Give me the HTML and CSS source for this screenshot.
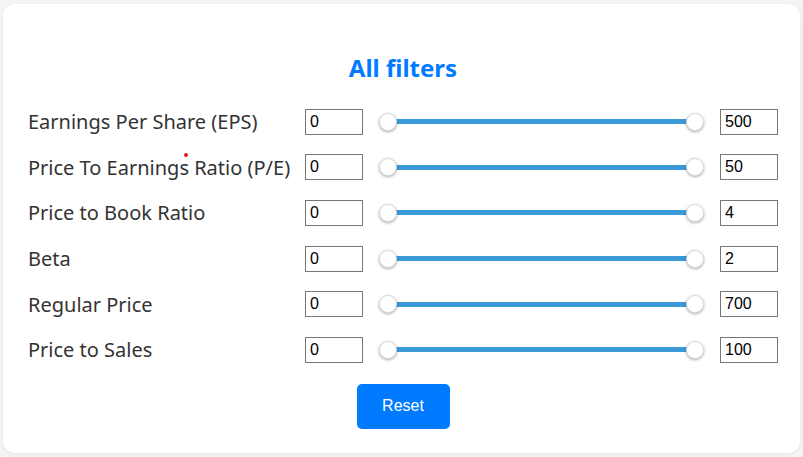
FILE: index.html
```html
<!DOCTYPE html>
<html>
<head>
<meta charset="utf-8">
<link rel="stylesheet" href="styles.css">
</head>
<body>
<div class="card">
  <h2 class="title">All filters</h2>
  <div class="rows">
    <div class="row">
      <span class="label">Earnings Per Share (EPS)</span>
      <input class="num" type="text" value="0">
      <div class="slider"><span class="thumb"></span><span class="bar"></span><span class="thumb"></span></div>
      <input class="num" type="text" value="500">
    </div>
    <div class="row">
      <span class="label">Price To Earnings Ratio (P/E)<span class="dot"></span></span>
      <input class="num" type="text" value="0">
      <div class="slider"><span class="thumb"></span><span class="bar"></span><span class="thumb"></span></div>
      <input class="num" type="text" value="50">
    </div>
    <div class="row">
      <span class="label">Price to Book Ratio</span>
      <input class="num" type="text" value="0">
      <div class="slider"><span class="thumb"></span><span class="bar"></span><span class="thumb"></span></div>
      <input class="num" type="text" value="4">
    </div>
    <div class="row">
      <span class="label">Beta</span>
      <input class="num" type="text" value="0">
      <div class="slider"><span class="thumb"></span><span class="bar"></span><span class="thumb"></span></div>
      <input class="num" type="text" value="2">
    </div>
    <div class="row">
      <span class="label">Regular Price</span>
      <input class="num" type="text" value="0">
      <div class="slider"><span class="thumb"></span><span class="bar"></span><span class="thumb"></span></div>
      <input class="num" type="text" value="700">
    </div>
    <div class="row">
      <span class="label">Price to Sales</span>
      <input class="num" type="text" value="0">
      <div class="slider"><span class="thumb"></span><span class="bar"></span><span class="thumb"></span></div>
      <input class="num" type="text" value="100">
    </div>
  </div>
  <div class="actions">
    <button class="reset" type="button">Reset</button>
  </div>
</div>
</body>
</html>
```

FILE: styles.css
```css
* { box-sizing: border-box; }
html, body { margin: 0; height: 100%; }
body {
  background: #f5f5f5;
  padding: 4px 3px 0 3px;
  font-family: "Noto Sans", "Open Sans", sans-serif;
}
.card {
  width: 797px;
  height: 449px;
  background: #fff;
  border-radius: 12px;
  box-shadow: 0 1px 4px rgba(0, 0, 0, 0.08);
  padding: 49px 22px 24px 25px;
}
.title {
  margin: 0 0 16px 0;
  height: 30px;
  line-height: 30px;
  text-align: center;
  font-size: 24px;
  font-weight: 700;
  color: #007bff;
}
.rows {
  display: grid;
  grid-auto-rows: 45.6px;
}
.row {
  display: grid;
  grid-template-columns: 261px 58px 325px 58px;
  column-gap: 16px;
  align-items: center;
}
.label {
  position: relative;
  font-size: 20px;
  line-height: 27px;
  color: #333;
  white-space: nowrap;
}
.dot {
  position: absolute;
  left: 156px;
  top: -1px;
  width: 4px;
  height: 4px;
  border-radius: 50%;
  background: #e8141e;
}
.num {
  width: 58px;
  height: 26px;
  border: 1px solid #767676;
  padding: 1px 4px;
  font-family: "Liberation Sans", Arial, sans-serif;
  font-size: 16px;
  color: #000;
  background: #fff;
  border-radius: 0;
  outline: none;
}
.slider {
  display: flex;
  align-items: center;
  height: 26px;
}
.thumb {
  flex: none;
  width: 18px;
  height: 18px;
  border-radius: 50%;
  background: #fff;
  border: 1px solid #dcdcdc;
  box-shadow: 0 1px 3px rgba(0, 0, 0, 0.35);
  position: relative;
  z-index: 1;
}
.bar {
  flex: 1;
  height: 5px;
  background: #3a9ad9;
  margin: 0 -9px;
}
.actions {
  display: flex;
  justify-content: center;
  margin-top: 11px;
}
.reset {
  width: 93px;
  height: 45px;
  border: none;
  border-radius: 5px;
  background: #007bff;
  color: #fff;
  font-family: "Liberation Sans", Arial, sans-serif;
  font-size: 16px;
  cursor: pointer;
}
```
